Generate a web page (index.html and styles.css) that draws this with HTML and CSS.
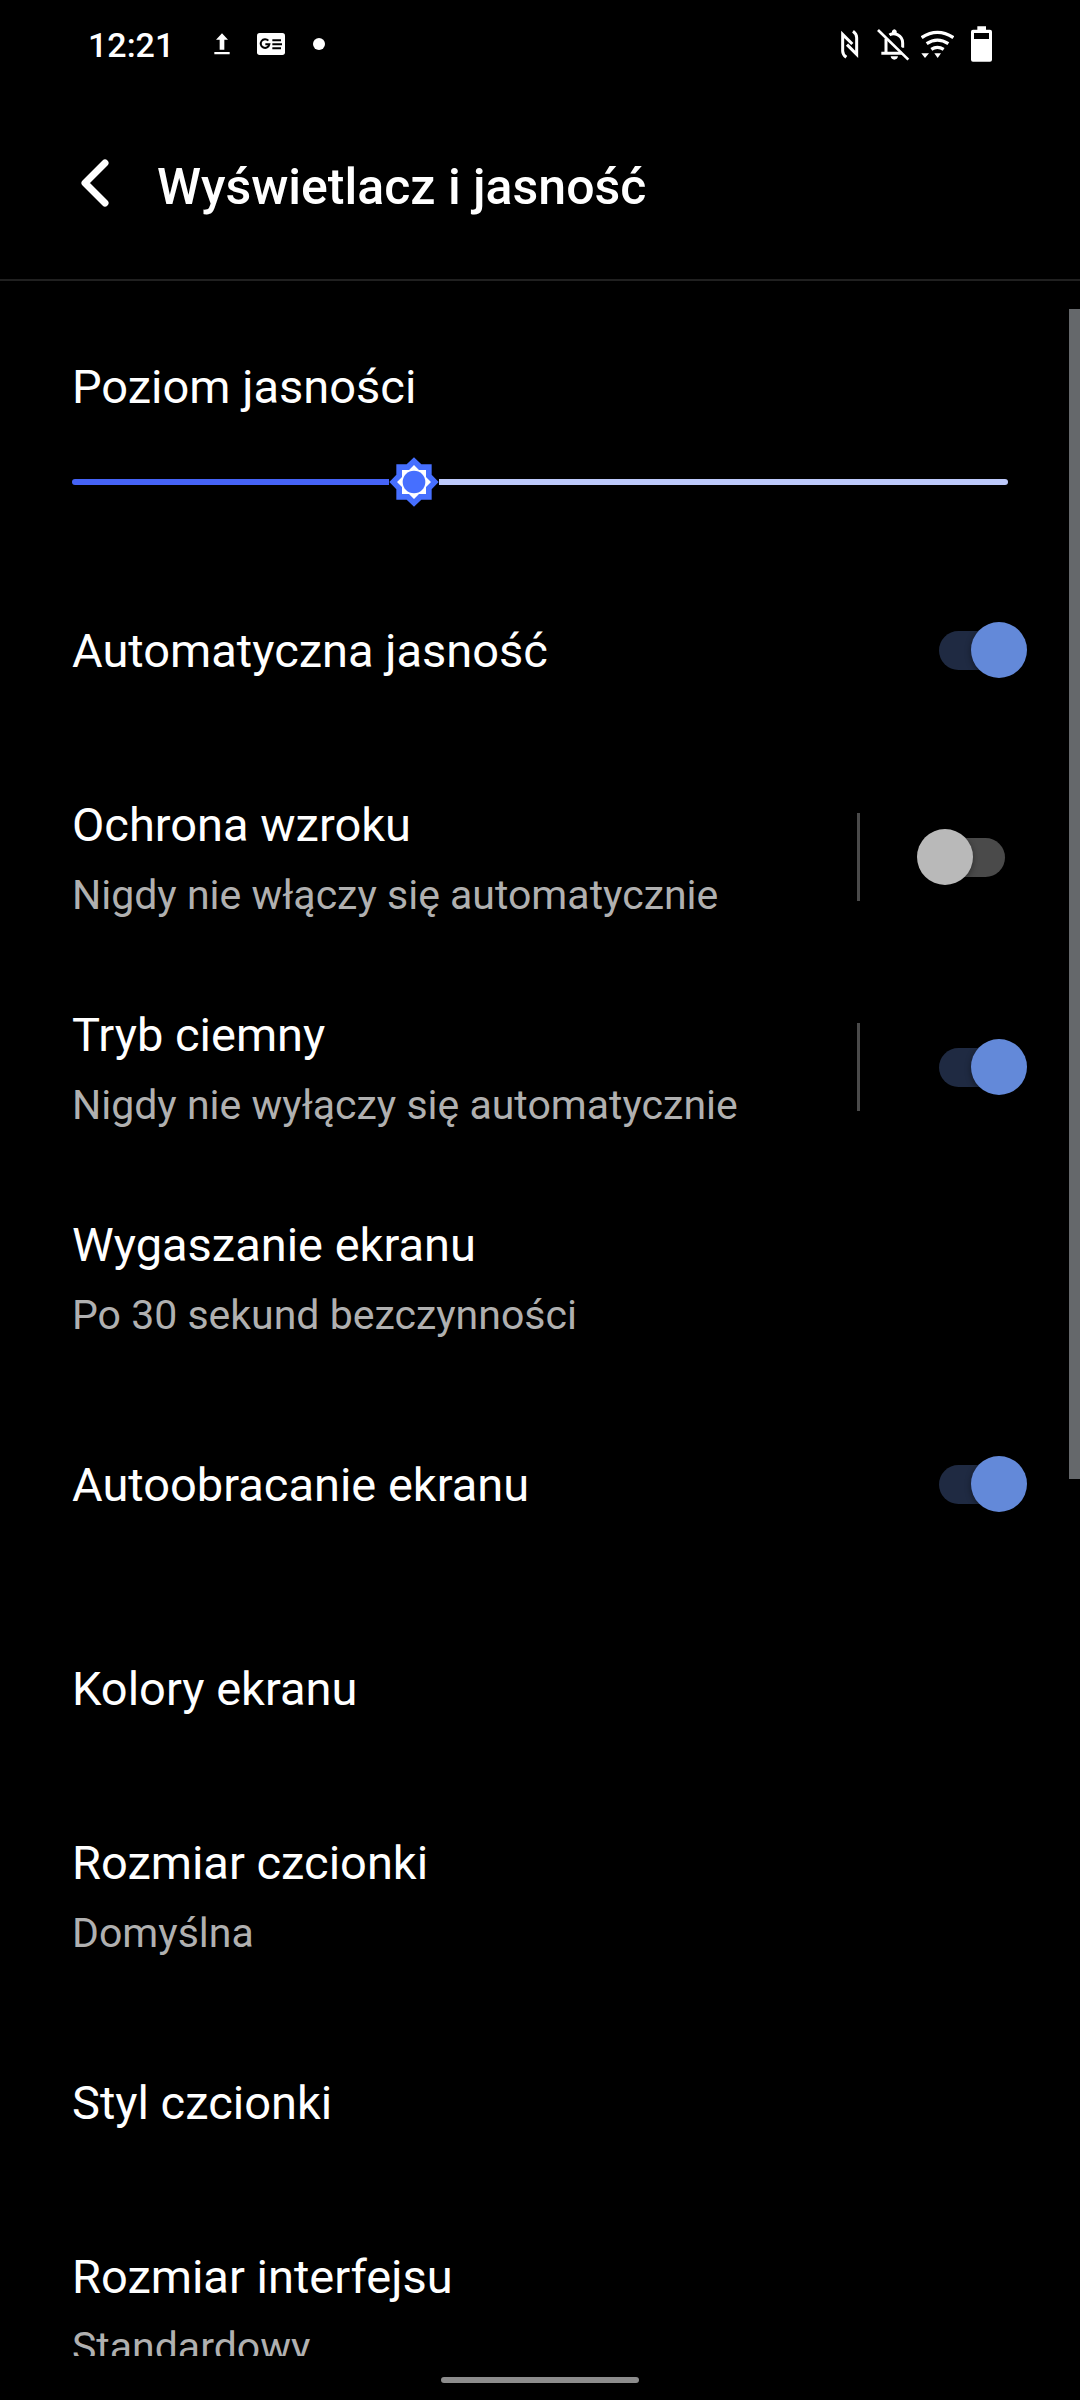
FILE: index.html
```html
<!DOCTYPE html>
<html lang="pl">
<head>
    <meta charset="UTF-8">
    <meta name="viewport" content="width=device-width, initial-scale=1.0">
    <title>Wyświetlacz i jasność</title>
    <link rel="stylesheet" href="styles.css">
</head>
<body>

<!-- Status bar -->
<div class="status-bar">
    <div class="status-left">
        <span class="clock">12:21</span>
        <svg class="icon-upload" viewBox="0 0 48 66" aria-hidden="true">
            <path d="M24 1 L42 20 H31 V50 H17 V20 H6 Z M1 57 H47 V64 H1 Z" fill="#fff"/>
        </svg>
        <svg class="icon-news" viewBox="0 0 84 66" aria-hidden="true">
            <rect width="84" height="66" rx="8" fill="#fff"/>
            <path d="M34 23 A13 13 0 1 0 37 34 H25" fill="none" stroke="#000" stroke-width="6"/>
            <path d="M46 22 H72 M46 34 H75 M46 46 H72" stroke="#000" stroke-width="6"/>
        </svg>
        <span class="status-dot"></span>
    </div>
    <div class="status-right">
        <svg class="icon-nfc" viewBox="60 57 57 87" aria-hidden="true">
            <path d="M79 139 Q68 131 68 120 V70 L97 99 M99 61 Q110 69 110 80 V130 L81 101" fill="none" stroke="#fff" stroke-width="9"/>
        </svg>
        <svg class="icon-bell" viewBox="171 51 99 99" aria-hidden="true">
            <path d="M198 83 V126 M184 127 H246 M208 72 Q220 65 232 71 Q248 79 248 96 V110" fill="none" stroke="#fff" stroke-width="9"/>
            <path d="M216 69 V60 Q223 50 230 60 V69 Z M212 136 H234 Q232 146 223 146 Q214 146 212 136 Z" fill="#fff"/>
            <path d="M181 51 L272 142" stroke="#000" stroke-width="8"/>
            <path d="M174 57 L265 146" stroke="#fff" stroke-width="8"/>
        </svg>
        <svg class="icon-wifi" viewBox="303 54 99 90" aria-hidden="true">
            <path d="M305 80 Q352 48 400 80 M320 98 Q352 77 385 98 M334 115 Q352 103 371 115" fill="none" stroke="#fff" stroke-width="10"/>
            <path d="M304 127 H327 L315 141 Z M343 127 H363 L353 141 Z" fill="#fff"/>
        </svg>
        <svg class="icon-battery" viewBox="453 48 63 108" aria-hidden="true">
            <path fill-rule="evenodd" d="M472 49 H498 V59 H510 Q516 59 516 65 V149 Q516 155 510 155 H459 Q453 155 453 149 V65 Q453 59 459 59 H472 Z M462 69 V87 H507 V69 Z" fill="#fff"/>
        </svg>
    </div>
</div>

<header>
    <button class="back-btn" type="button" aria-label="Wstecz">
        <svg viewBox="0 0 32 52" aria-hidden="true">
            <path d="M26 6 L6 26 L26 46" fill="none" stroke="#fff" stroke-width="7" stroke-linecap="round" stroke-linejoin="round"/>
        </svg>
    </button>
    <h1>Wyświetlacz i jasność</h1>
</header>

<main>
    <div class="brightness">
        <label class="title" for="brightness">Poziom jasności</label>
        <input type="range" id="brightness" min="0" max="1000" value="358">
    </div>

    <div class="row">
        <label class="title" for="auto-brightness">Automatyczna jasność</label>
        <input type="checkbox" class="switch" id="auto-brightness" checked>
    </div>

    <div class="row double">
        <div class="text">
            <label class="title" for="eye-comfort">Ochrona wzroku</label>
            <p class="summary">Nigdy nie włączy się automatycznie</p>
        </div>
        <span class="divider"></span>
        <input type="checkbox" class="switch" id="eye-comfort">
    </div>

    <div class="row double">
        <div class="text">
            <label class="title" for="dark-mode">Tryb ciemny</label>
            <p class="summary">Nigdy nie wyłączy się automatycznie</p>
        </div>
        <span class="divider"></span>
        <input type="checkbox" class="switch" id="dark-mode" checked>
    </div>

    <a href="#timeout" class="row double">
        <span class="text">
            <span class="title">Wygaszanie ekranu</span>
            <span class="summary">Po 30 sekund bezczynności</span>
        </span>
    </a>

    <div class="row">
        <label class="title" for="auto-rotate">Autoobracanie ekranu</label>
        <input type="checkbox" class="switch" id="auto-rotate" checked>
    </div>

    <a href="#colors" class="row">
        <span class="title">Kolory ekranu</span>
    </a>

    <a href="#font-size" class="row double">
        <span class="text">
            <span class="title">Rozmiar czcionki</span>
            <span class="summary">Domyślna</span>
        </span>
    </a>

    <a href="#font-style" class="row">
        <span class="title">Styl czcionki</span>
    </a>

    <a href="#display-size" class="row double">
        <span class="text">
            <span class="title">Rozmiar interfejsu</span>
            <span class="summary">Standardowy</span>
        </span>
    </a>

    <div class="scrollbar"></div>
</main>

<footer>
    <span class="home-pill"></span>
</footer>

</body>
</html>
```
FILE: styles.css
```css
* {
    box-sizing: border-box;
}

body {
    display: flex;
    flex-direction: column;
    height: 100vh;
    margin: 0;
    background-color: #000;
    color: #fff;
    font-family: Roboto, sans-serif;
    overflow: hidden;
}

/* Status bar */
.status-bar {
    display: flex;
    flex-shrink: 0;
    justify-content: space-between;
    align-items: center;
    height: 88px;
    padding: 0 88px;
}

.status-left,
.status-right {
    display: flex;
    align-items: center;
}

.clock {
    margin-right: 40px;
    padding-top: 2px;
    font-size: 34px;
    font-weight: 500;
    line-height: 40px;
}

.icon-upload {
    width: 16px;
    height: 22px;
    margin-right: 27px;
}

.icon-news {
    width: 28px;
    height: 22px;
    margin-right: 28px;
}

.status-dot {
    width: 12px;
    height: 12px;
    border-radius: 50%;
    background-color: #fff;
}

.icon-nfc {
    width: 19px;
    height: 29px;
    margin-right: 18px;
}

.icon-bell {
    width: 33px;
    height: 33px;
    margin-right: 11px;
}

.icon-wifi {
    width: 33px;
    height: 30px;
    margin-right: 17px;
}

.icon-battery {
    width: 21px;
    height: 36px;
}

/* Header */
header {
    display: flex;
    flex-shrink: 0;
    align-items: flex-start;
    gap: 46px;
    padding: 69px 79px 62px;
    border-bottom: 2px solid #202020;
}

.back-btn {
    width: 32px;
    height: 52px;
    padding: 0;
    border: none;
    background: none;
    cursor: pointer;
}

.back-btn svg {
    display: block;
    width: 32px;
    height: 52px;
}

h1 {
    margin: 0;
    font-size: 50px;
    font-weight: 500;
    line-height: 60px;
}

/* Settings list */
main {
    position: relative;
    flex: 1;
    min-height: 0;
    overflow: hidden;
}

.title {
    display: block;
    font-size: 47px;
    line-height: 56px;
}

.summary {
    display: block;
    margin: 18px 0 0;
    color: #b0b0b0;
    font-size: 41px;
    line-height: 48px;
}

.brightness {
    padding: 78px 72px 41px;
}

.brightness input {
    display: block;
    width: 100%;
    height: 50px;
    margin: 42px 0 0;
    background: none;
    appearance: none;
    cursor: pointer;
}

.brightness input::-webkit-slider-runnable-track {
    height: 6px;
    border-radius: 3px;
    background: linear-gradient(to right, #4563f6 36%, #bdc9fb 36%);
}

.brightness input::-webkit-slider-thumb {
    width: 50px;
    height: 50px;
    margin-top: -22px;
    appearance: none;
    background: #000 url("data:image/svg+xml,%3Csvg xmlns='http://www.w3.org/2000/svg' viewBox='-75 -75 150 150'%3E%3Cpath fill='%23466fff' d='M0-74 22-53H53V-22L74 0 53 22V53H22L0 74-22 53H-53V22L-74 0-53-22V-53H-22Z'/%3E%3Cpath fill='%23fff' d='M0-51 15-36H36V-15L51 0 36 15V36H15L0 51-15 36H-36V15L-51 0-36-15V-36H-15Z'/%3E%3Ccircle r='34' fill='%23466fff'/%3E%3C/svg%3E") center / 100% 100%;
}

.row {
    display: flex;
    align-items: center;
    min-height: 204px;
    padding: 0 53px 0 72px;
    color: inherit;
    text-decoration: none;
}

.row.double {
    min-height: 210px;
}

.row > .title,
.row > .text {
    flex: 1;
    padding-top: 1px;
}

.divider {
    width: 3px;
    height: 88px;
    margin-right: 57px;
    background-color: #4a4a4a;
}

/* Toggle switch */
.switch {
    display: grid;
    flex-shrink: 0;
    align-items: center;
    width: 110px;
    height: 56px;
    margin: 0;
    appearance: none;
    cursor: pointer;
}

.switch::before,
.switch::after {
    content: "";
    grid-area: 1 / 1;
}

.switch::before {
    justify-self: center;
    width: 66px;
    height: 39px;
    border-radius: 20px;
    background-color: #4a4a4a;
}

.switch::after {
    width: 56px;
    height: 56px;
    border-radius: 50%;
    background-color: #b9b9b9;
    box-shadow: 0 2px 6px rgba(0, 0, 0, 0.4);
}

.switch:checked::before {
    background-color: #1f2a42;
}

.switch:checked::after {
    justify-self: end;
    background-color: #6389d9;
}

.scrollbar {
    position: absolute;
    top: 28px;
    right: 0;
    width: 11px;
    height: 56.4%;
    background-color: #65686b;
}

/* Gesture bar */
footer {
    display: flex;
    flex-shrink: 0;
    justify-content: center;
    align-items: center;
    height: 44px;
    padding-top: 4px;
}

.home-pill {
    width: 198px;
    height: 6px;
    border-radius: 3px;
    background-color: #8c8c8c;
}
```
